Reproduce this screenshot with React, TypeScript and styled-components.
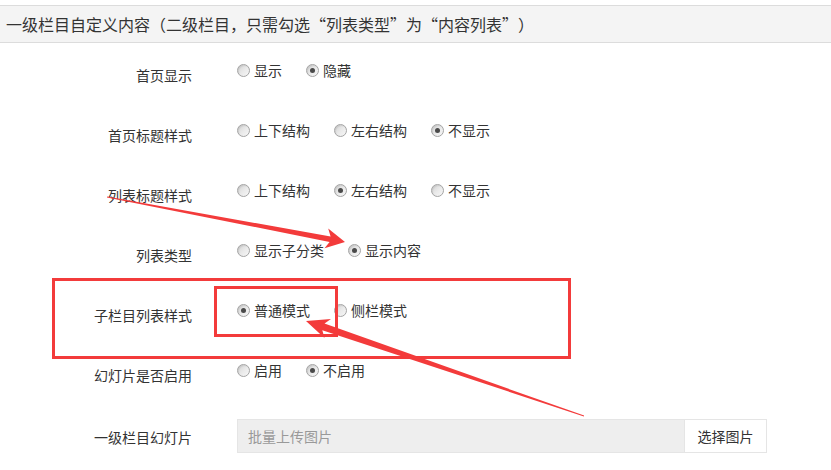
import styled, { createGlobalStyle } from 'styled-components';

const GlobalStyle = createGlobalStyle`
    html, body {
        margin: 0;
        padding: 0;
        background: #fff;
        overflow: hidden;
    }
    body {
        font-family: "Noto Sans CJK SC", "Noto Sans", sans-serif;
        color: #333;
        text-spacing-trim: space-all;
    }
`;

const Page = styled.div`
    position: relative;
    width: 831px;
    height: 470px;
    overflow: hidden;
`;

const Header = styled.div`
    margin-top: 5px;
    height: 36px;
    line-height: 36px;
    padding-left: 6px;
    background: #f4f4f4;
    border-top: 1px solid #dcdcdc;
    border-bottom: 1px solid #dcdcdc;
    font-size: 16px;
    color: #333;
    white-space: nowrap;
    text-spacing-trim: space-all;
`;

const Form = styled.div`
    padding-top: 7px;
`;

const Row = styled.div`
    display: flex;
    height: 60px;
`;

const Label = styled.div<{ $top?: number }>`
    width: 192px;
    padding-top: ${(p) => p.$top ?? 15}px;
    line-height: 20px;
    font-size: 14px;
    text-align: right;
    color: #333;
    white-space: nowrap;
`;

const Options = styled.div<{ $top?: number }>`
    display: flex;
    align-items: center;
    align-self: flex-start;
    margin-left: 45px;
    padding-top: ${(p) => p.$top ?? 10}px;
    min-height: 20px;
`;

const Option = styled.label`
    display: flex;
    align-items: center;
    margin-right: 24px;
    font-size: 14px;
    line-height: 20px;
    color: #333;
    white-space: nowrap;
`;

const RadioMark = styled.span<{ $checked?: boolean }>`
    position: relative;
    box-sizing: border-box;
    width: 13px;
    height: 13px;
    margin-right: 4px;
    border-radius: 50%;
    border: 1px solid #a4a4a4;
    background: linear-gradient(135deg, #d2d2d2 0%, #e9e9e9 50%, #f7f7f7 100%);
    box-shadow: inset 1px 1px 1px rgba(0, 0, 0, 0.08);

    &::after {
        content: '';
        display: ${(p) => (p.$checked ? 'block' : 'none')};
        position: absolute;
        left: 3px;
        top: 3px;
        width: 5px;
        height: 5px;
        border-radius: 50%;
        background: #4a4a4a;
    }
`;

const Upload = styled.div`
    display: flex;
    width: 528px;
    height: 32px;
    border: 1px solid #e5e5e5;
    font-size: 14px;
`;

const UploadField = styled.div`
    flex: 1;
    background: #eee;
    color: #999;
    line-height: 32px;
    padding-left: 10px;
`;

const UploadButton = styled.div`
    width: 81px;
    border-left: 1px solid #e5e5e5;
    background: #fff;
    color: #333;
    line-height: 32px;
    text-align: center;
`;

const Overlay = styled.svg`
    position: absolute;
    left: 0;
    top: 0;
    pointer-events: none;
`;

type Pt = [number, number];

const arrowPoints = (tail: Pt, tip: Pt, headLen: number, headHalf: number, shaft: number) => {
    const dx = tip[0] - tail[0];
    const dy = tip[1] - tail[1];
    const len = Math.hypot(dx, dy);
    const ux = dx / len;
    const uy = dy / len;
    const nx = -uy;
    const ny = ux;
    const bx = tip[0] - ux * headLen;
    const by = tip[1] - uy * headLen;
    // inner notch a little ahead of the barbs
    const ix = tip[0] - ux * headLen * 0.8;
    const iy = tip[1] - uy * headLen * 0.8;
    const pts: Pt[] = [
        [tail[0] + nx * 0.4, tail[1] + ny * 0.4],
        [ix + (nx * shaft) / 2, iy + (ny * shaft) / 2],
        [bx + nx * headHalf, by + ny * headHalf],
        tip,
        [bx - nx * headHalf, by - ny * headHalf],
        [ix - (nx * shaft) / 2, iy - (ny * shaft) / 2],
        [tail[0] - nx * 0.4, tail[1] - ny * 0.4],
    ];
    return pts.map((p) => `${p[0].toFixed(1)},${p[1].toFixed(1)}`).join(' ');
};

type RadioRow = { label: string; options: string[]; checked: number };

const rows: RadioRow[] = [
    { label: '首页显示', options: ['显示', '隐藏'], checked: 1 },
    { label: '首页标题样式', options: ['上下结构', '左右结构', '不显示'], checked: 2 },
    { label: '列表标题样式', options: ['上下结构', '左右结构', '不显示'], checked: 1 },
    { label: '列表类型', options: ['显示子分类', '显示内容'], checked: 1 },
    { label: '子栏目列表样式', options: ['普通模式', '侧栏模式'], checked: 0 },
    { label: '幻灯片是否启用', options: ['启用', '不启用'], checked: 1 },
];

const RED = '#f33b3b';

export default function App() {
    return (
        <Page>
            <GlobalStyle />
            <Header>一级栏目自定义内容（二级栏目，只需勾选“列表类型”为“内容列表”）</Header>

            <Form>
                {rows.map((row) => (
                    <Row key={row.label}>
                        <Label>{row.label}</Label>
                        <Options>
                            {row.options.map((opt, i) => (
                                <Option key={opt}>
                                    <RadioMark $checked={i === row.checked} />
                                    {opt}
                                </Option>
                            ))}
                        </Options>
                    </Row>
                ))}

                <Row>
                    <Label $top={17}>一级栏目幻灯片</Label>
                    <Options $top={9}>
                        <Upload>
                            <UploadField>批量上传图片</UploadField>
                            <UploadButton>选择图片</UploadButton>
                        </Upload>
                    </Options>
                </Row>
            </Form>

            {/* annotations */}
            <Overlay width={831} height={470} viewBox="0 0 831 470">
                <rect x={53.5} y={279.5} width={516} height={78} fill="none" stroke={RED} strokeWidth={3} />
                <rect x={215.5} y={287.5} width={121} height={48} fill="none" stroke={RED} strokeWidth={3} />
                <polygon points={arrowPoints([107, 197], [345, 242], 19, 10, 5.5)} fill={RED} />
                <polygon points={arrowPoints([584, 416], [306, 321], 23, 10, 7)} fill={RED} />
            </Overlay>
        </Page>
    );
}
